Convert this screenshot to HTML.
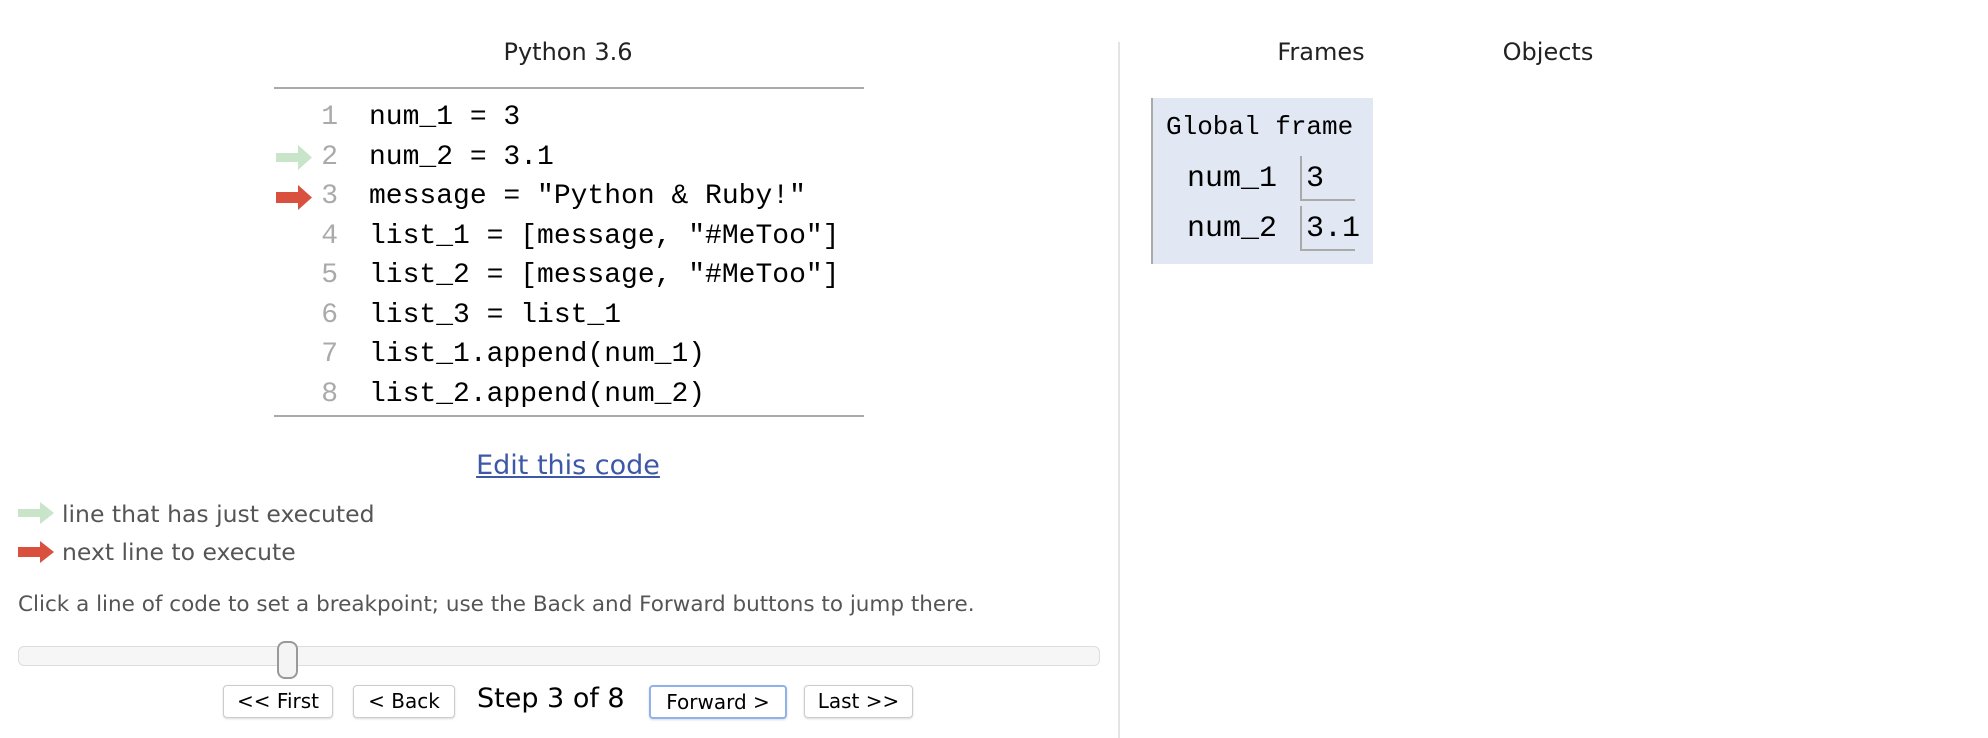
<!DOCTYPE html>
<html><head><meta charset="utf-8"><style>
body{margin:0;width:1988px;height:738px;background:#fff;position:relative;overflow:hidden;font-family:"DejaVu Sans","Liberation Sans",sans-serif;color:#222}
.a{position:absolute;white-space:nowrap}
.mono{font-family:"Liberation Mono","DejaVu Sans Mono",monospace}
.ln{position:absolute;left:316px;width:22px;text-align:right;color:#aaa;font-size:28px}
.cd{position:absolute;left:369px;font-size:28px;color:#000}
.btn{position:absolute;top:685px;height:31px;border:1px solid #ccc;border-radius:4px;background:#fff;box-shadow:0 1px 2px rgba(0,0,0,.15);font-size:20px;text-align:center;line-height:31px;color:#000}
</style></head><body>
<div class="a" style="left:0;width:1136px;top:38px;text-align:center;font-size:24px;color:#222">Python 3.6</div>
<div class="a" style="left:274px;width:590px;top:87px;height:2px;background:#aaa"></div>
<div class="a" style="left:274px;width:590px;top:415px;height:2px;background:#aaa"></div>

<svg class="a" style="left:276px;top:145px" width="36" height="25"><path d="M0 8h22V0l14 12.5L22 25v-8H0z" fill="#c8e4c9"/></svg>
<svg class="a" style="left:276px;top:185px" width="36" height="25"><path d="M0 7h22V0l14 12.5L22 25v-7H0z" fill="#d9503f"/></svg>

<div class="mono">
<div class="ln" style="top:102px">1</div><div class="cd" style="top:102px">num_1 = 3</div>
<div class="ln" style="top:142px">2</div><div class="cd" style="top:142px">num_2 = 3.1</div>
<div class="ln" style="top:181px">3</div><div class="cd" style="top:181px">message = "Python &amp; Ruby!"</div>
<div class="ln" style="top:221px">4</div><div class="cd" style="top:221px">list_1 = [message, "#MeToo"]</div>
<div class="ln" style="top:260px">5</div><div class="cd" style="top:260px">list_2 = [message, "#MeToo"]</div>
<div class="ln" style="top:300px">6</div><div class="cd" style="top:300px">list_3 = list_1</div>
<div class="ln" style="top:339px">7</div><div class="cd" style="top:339px">list_1.append(num_1)</div>
<div class="ln" style="top:379px">8</div><div class="cd" style="top:379px">list_2.append(num_2)</div>
</div>

<div class="a" style="left:0;width:1136px;top:450px;text-align:center;font-size:27px;color:#3d58a6;text-decoration:underline">Edit this code</div>

<svg class="a" style="left:18px;top:502px" width="36" height="22"><path d="M0 7h22V0l14 11L22 22v-7H0z" fill="#c8e4c9"/></svg>
<div class="a" style="left:62px;top:500px;font-size:23.5px;color:#555">line that has just executed</div>
<svg class="a" style="left:18px;top:541px" width="36" height="22"><path d="M0 6h22V0l14 11L22 22v-6H0z" fill="#d9503f"/></svg>
<div class="a" style="left:62px;top:538px;font-size:23.5px;color:#555">next line to execute</div>

<div class="a" style="left:18px;top:592px;font-size:21.5px;color:#555">Click a line of code to set a breakpoint; use the Back and Forward buttons to jump there.</div>

<div class="a" style="left:18px;top:646px;width:1080px;height:18px;border:1px solid #ddd;border-radius:6px;background:#f6f6f6"></div>
<div class="a" style="left:277px;top:641px;width:17px;height:34px;border:2px solid #999;border-radius:8px;background:#f4f4f4"></div>

<div class="btn" style="left:223px;width:108px">&lt;&lt; First</div>
<div class="btn" style="left:353px;width:100px">&lt; Back</div>
<div class="a" style="left:477px;top:683px;font-size:27px;color:#000">Step 3 of 8</div>
<div class="btn" style="left:649px;width:134px;border:2px solid #8fb2ec;height:30px;line-height:30px">Forward &gt;</div>
<div class="btn" style="left:804px;width:107px">Last &gt;&gt;</div>

<div class="a" style="left:1118px;top:42px;width:2px;height:696px;background:#e4e4e4"></div>
<div class="a" style="left:1321px;top:38px;transform:translateX(-50%);font-size:24px">Frames</div>
<div class="a" style="left:1548px;top:38px;transform:translateX(-50%);font-size:24px">Objects</div>

<div class="a" style="left:1151px;top:98px;width:220px;height:166px;background:#e2e8f3;border-left:2px solid #aaa"></div>
<div class="a mono" style="left:1166px;top:112px;font-size:26px;color:#000">Global frame</div>
<div class="a mono" style="left:1187px;top:162px;font-size:30px;color:#000">num_1</div>
<div class="a" style="left:1300px;top:156px;width:53px;height:43px;border-left:2px solid #aaa;border-bottom:2px solid #aaa"></div>
<div class="a mono" style="left:1306px;top:162px;font-size:30px;color:#000">3</div>
<div class="a mono" style="left:1187px;top:212px;font-size:30px;color:#000">num_2</div>
<div class="a" style="left:1300px;top:206px;width:53px;height:43px;border-left:2px solid #aaa;border-bottom:2px solid #aaa"></div>
<div class="a mono" style="left:1306px;top:212px;font-size:30px;color:#000">3.1</div>
</body></html>
